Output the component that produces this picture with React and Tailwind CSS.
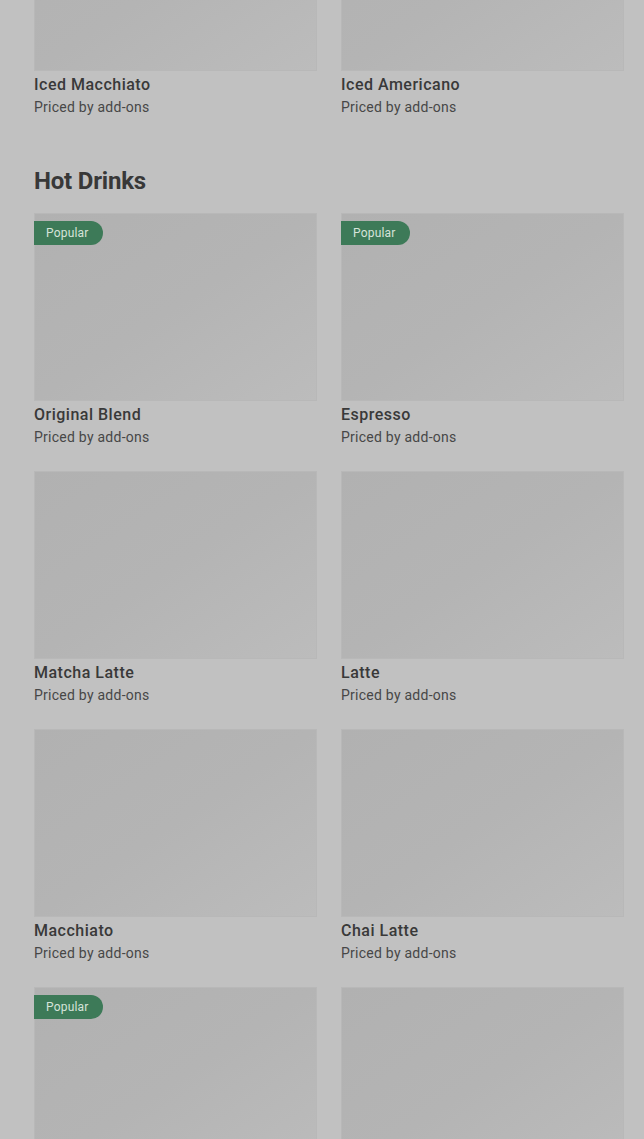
const FONT = { fontFamily: 'Roboto, "Liberation Sans", sans-serif' }

const ICED = [
  { name: 'Iced Macchiato' },
  { name: 'Iced Americano' },
]

const HOT = [
  { name: 'Original Blend', popular: true },
  { name: 'Espresso', popular: true },
  { name: 'Matcha Latte' },
  { name: 'Latte' },
  { name: 'Macchiato' },
  { name: 'Chai Latte' },
  { name: 'Mocha', popular: true },
  { name: 'Americano' },
]

function DrinkCard({ name, popular }) {
  return (
    <div className="flex flex-col">
      <div className="relative aspect-[283/188] bg-gradient-to-br from-[#b1b1b1] via-[#b4b4b4] to-[#bcbcbc] border border-[#b8b8b8]">
        {popular && (
          <span className="absolute left-[-1px] top-[7px] h-6 pl-3 pr-3.5 flex items-center rounded-r-full bg-[#3d7a58] text-[12px] tracking-[0.2px] text-[#d6e3da]">
            Popular
          </span>
        )}
      </div>
      <div className="mt-0.5 text-[16px] leading-6 font-medium tracking-[0.5px] text-[#393939]">{name}</div>
      <div className="text-[14px] leading-5 tracking-[0.25px] text-[#474747]">Priced by add-ons</div>
    </div>
  )
}

function Grid({ items }) {
  return (
    <div className="grid grid-cols-2 gap-x-6 gap-y-6">
      {items.map((d) => <DrinkCard key={d.name} {...d} />)}
    </div>
  )
}

export default function App() {
  return (
    <div className="min-h-screen bg-[#c1c1c1]" style={FONT}>
      <div className="pl-[34px] pr-5 -mt-[117px] pb-10">
        <Grid items={ICED} />

        <section className="mt-12">
          <h2 className="text-[24px] leading-8 font-bold tracking-[-0.2px] text-[#383838] mb-4">Hot Drinks</h2>
          <Grid items={HOT} />
        </section>
      </div>
    </div>
  )
}
